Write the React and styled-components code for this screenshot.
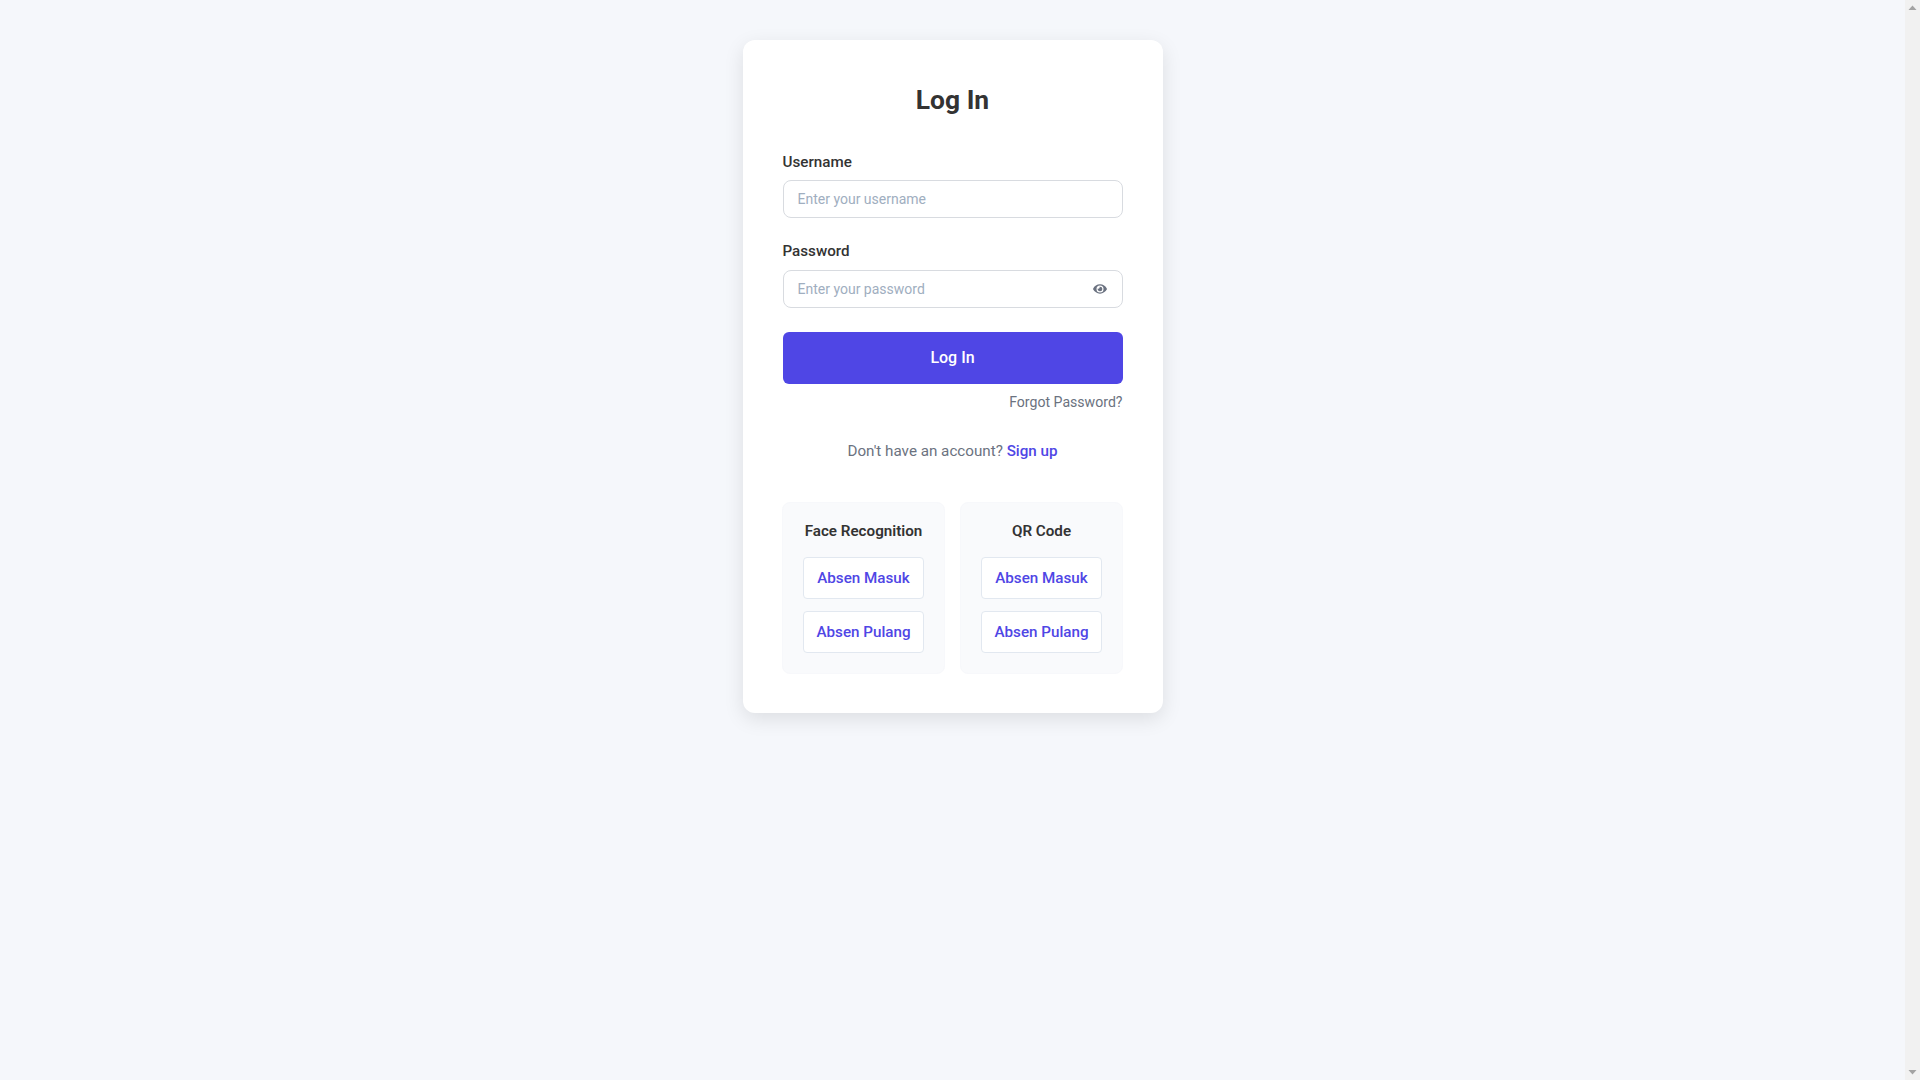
import styled, { createGlobalStyle } from 'styled-components';
import { FaEye } from 'react-icons/fa';

const GlobalStyle = createGlobalStyle`
    body {
        margin: 0;
        background: #f5f7fb;
        font-family: Roboto, 'Liberation Sans', sans-serif;
        color: #333;
    }

    * {
        box-sizing: border-box;
    }
`;

const attendance = ['Face Recognition', 'QR Code'];

const App = () => {
    return (
        <Page>
            <GlobalStyle />
            <Main>
                <Card>
                    <Title>Log In</Title>
                    <Form onSubmit={(e) => e.preventDefault()}>
                        <Field>
                            <Label htmlFor="username">Username</Label>
                            <Input id="username" type="text" placeholder="Enter your username" />
                        </Field>
                        <Field>
                            <Label htmlFor="password">Password</Label>
                            <PasswordWrap>
                                <Input id="password" type="password" placeholder="Enter your password" />
                                <EyeButton type="button">
                                    <FaEye size={14} />
                                </EyeButton>
                            </PasswordWrap>
                        </Field>
                        <SubmitBtn type="submit">Log In</SubmitBtn>
                    </Form>
                    <ForgotRow>
                        <ForgotLink href="#">Forgot Password?</ForgotLink>
                    </ForgotRow>
                    <SignupText>
                        Don't have an account? <SignupLink href="#">Sign up</SignupLink>
                    </SignupText>
                    <PanelGrid>
                        {attendance.map((name) => (
                            <Panel key={name}>
                                <PanelTitle>{name}</PanelTitle>
                                <PanelBtn href="#">Absen Masuk</PanelBtn>
                                <PanelBtn href="#">Absen Pulang</PanelBtn>
                            </Panel>
                        ))}
                    </PanelGrid>
                </Card>
            </Main>
            {/* 스크롤바 */}
            <ScrollRail>
                <svg width="15" height="15" viewBox="0 0 15 15">
                    <path d="M7.5 5.5 L11.5 10 L3.5 10 Z" fill="#a3a3a3" />
                </svg>
                <svg width="15" height="15" viewBox="0 0 15 15">
                    <path d="M3.5 5 L11.5 5 L7.5 9.5 Z" fill="#a3a3a3" />
                </svg>
            </ScrollRail>
        </Page>
    );
};

export default App;

const Page = styled.div`
    display: flex;
    height: 1080px;
    overflow: hidden;
`;

const Main = styled.main`
    flex: 1;
    display: flex;
    justify-content: center;
    align-items: flex-start;
    padding-top: 40px;
`;

const ScrollRail = styled.div`
    flex: 0 0 15px;
    display: flex;
    flex-direction: column;
    justify-content: space-between;
    background: #f1f1f1;
`;

const Card = styled.div`
    width: 420px;
    padding: 40px 40px 39px;
    background: #fff;
    border-radius: 12px;
    box-shadow: 0 6px 20px rgba(0, 0, 0, 0.1);
`;

const Title = styled.h2`
    margin: 0 0 30.5px;
    font-size: 26.4px;
    line-height: 40px;
    font-weight: 700;
    text-align: center;
    color: #333;
`;

const Form = styled.form`
    display: block;
`;

const Field = styled.div`
    margin-bottom: 22.5px;
`;

const Label = styled.label`
    display: block;
    margin-bottom: 6.7px;
    font-size: 15.2px;
    line-height: 22.8px;
    font-weight: 500;
    color: #333;
`;

const PasswordWrap = styled.div`
    position: relative;
`;

const Input = styled.input`
    display: block;
    width: 100%;
    height: 38px;
    padding: 0 14px;
    border: 1px solid #d8dbe0;
    border-radius: 8px;
    background: #fff;
    font-family: inherit;
    font-size: 14px;
    outline: none;

    &::placeholder {
        color: #a0aec0;
    }
`;

const EyeButton = styled.button`
    position: absolute;
    top: 12px;
    right: 16px;
    display: flex;
    padding: 0;
    border: none;
    background: none;
    color: #6b7280;
    cursor: pointer;
`;

const SubmitBtn = styled.button`
    display: block;
    width: 100%;
    height: 52px;
    margin-top: 24px;
    border: none;
    border-radius: 6px;
    background: #4f46e5;
    color: #fff;
    font-family: inherit;
    font-size: 16px;
    font-weight: 500;
    cursor: pointer;
`;

const ForgotRow = styled.div`
    margin-top: 7px;
    text-align: right;
    line-height: 21px;
`;

const ForgotLink = styled.a`
    font-size: 14.1px;
    color: #6b7280;
    text-decoration: none;
`;

const SignupText = styled.p`
    margin: 27.3px 0 0;
    font-size: 15.2px;
    line-height: 22.8px;
    text-align: center;
    color: #6b7280;
`;

const SignupLink = styled.a`
    color: #4f46e5;
    font-weight: 500;
    text-decoration: none;
`;

const PanelGrid = styled.div`
    display: grid;
    grid-template-columns: 1fr 1fr;
    gap: 15px;
    margin: 39px -0.5px 0;
`;

const Panel = styled.div`
    display: flex;
    flex-direction: column;
    padding: 17px 20px 20px;
    border: 1px solid #f7f8fb;
    border-radius: 8px;
    background: #f9fafc;
`;

const PanelTitle = styled.h3`
    margin: 0 0 14.5px;
    font-size: 15.2px;
    line-height: 22.8px;
    font-weight: 600;
    text-align: center;
    color: #333;
`;

const PanelBtn = styled.a`
    display: block;
    height: 42px;
    margin-bottom: 12px;
    border: 1px solid #e2e8f0;
    border-radius: 4px;
    background: #fff;
    font-size: 15.2px;
    line-height: 40px;
    font-weight: 500;
    text-align: center;
    color: #4f46e5;
    text-decoration: none;

    &:last-child {
        margin-bottom: 0;
    }
`;
